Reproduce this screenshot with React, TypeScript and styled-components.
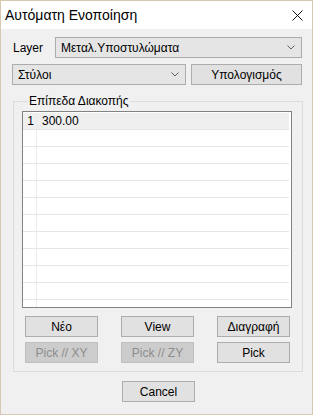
import styled, { createGlobalStyle } from "styled-components";

const GlobalStyle = createGlobalStyle`
  html, body {
    margin: 0;
    padding: 0;
    background: #f0f0f0;
  }
  body {
    font-family: "Liberation Sans", "Noto Sans", sans-serif;
    font-size: 12px;
    color: #000;
  }
  * {
    box-sizing: border-box;
  }
`;

const Window = styled.div`
  width: 313px;
  height: 415px;
  border: 1px solid #d9c8b1;
  background: #f0f0f0;
  display: flex;
  flex-direction: column;
`;

const TitleBar = styled.div`
  height: 28px;
  flex-shrink: 0;
  background: #fff;
  display: flex;
  align-items: center;
  justify-content: space-between;
  padding: 0 9px 0 4px;
  font-size: 14px;
`;

const Body = styled.div`
  display: flex;
  flex-direction: column;
  padding: 8px 10px 0 11px;
`;

const Row = styled.div<{ $top?: number }>`
  display: flex;
  align-items: center;
  gap: 5px;
  margin-top: ${(p) => p.$top || 0}px;
  height: 21px;
`;

const Label = styled.div`
  width: 38px;
  flex-shrink: 0;
  padding-left: 1px;
`;

const Combo = styled.div<{ $width?: number }>`
  height: 21px;
  ${(p) => (p.$width ? `width: ${p.$width}px;` : "flex: 1;")}
  flex-shrink: 0;
  display: flex;
  align-items: center;
  justify-content: space-between;
  padding: 0 6px 0 5px;
  border: 1px solid #acacac;
  background: #e5e5e5;
`;

const Button = styled.button<{ $width?: number }>`
  height: 21px;
  ${(p) => (p.$width ? `width: ${p.$width}px;` : "flex: 1;")}
  font-family: inherit;
  font-size: 12px;
  color: #000;
  background: #e1e1e1;
  border: 1px solid #adadad;
  padding: 0;
  &:disabled {
    color: #8d8d8d;
    background: #cccccc;
    border-color: #bfbfbf;
  }
`;

const Group = styled.fieldset`
  margin: 8px -1px 0 1px;
  padding: 0 10px 8px 8px;
  border: 1px solid #dcdcdc;
  min-width: 0;
`;

const Legend = styled.legend`
  margin-left: 6px;
  padding: 0 1px;
  line-height: 16px;
`;

const List = styled.div`
  margin-top: 2px;
  height: 197px;
  border: 1px solid #828282;
  background: #fff;
  padding: 1px 2px 0 0;
  overflow: hidden;
`;

const ListRow = styled.div<{ $selected?: boolean }>`
  display: flex;
  height: 17px;
  border-bottom: 1px solid #e6e6e6;
  background: ${(p) => (p.$selected ? "#efefef" : "#fff")};
`;

const NumCell = styled.div`
  width: 14px;
  border-right: 1px solid #ececec;
  text-align: right;
  padding-right: 2px;
  line-height: 16px;
`;

const ValueCell = styled.div`
  padding-left: 5px;
  line-height: 16px;
`;

const ButtonGrid = styled.div`
  display: grid;
  grid-template-columns: repeat(3, 73px);
  column-gap: 23px;
  row-gap: 5px;
  margin: 8px 0 0 3px;
`;

const Footer = styled.div`
  display: flex;
  justify-content: center;
  padding-left: 3px;
  margin-top: 9px;
`;

const Chevron = () => (
  <svg width="8" height="5" viewBox="0 0 8 5">
    <polyline points="0.5,0.5 4,4 7.5,0.5" fill="none" stroke="#606060" strokeWidth="1" />
  </svg>
);

const CloseIcon = () => (
  <svg width="11" height="11" viewBox="0 0 11 11">
    <path d="M0.5 0.5 L10.5 10.5 M10.5 0.5 L0.5 10.5" stroke="#111" strokeWidth="1" />
  </svg>
);

const rows = [{ n: "1", v: "300.00" }, ...Array.from({ length: 11 }, () => ({ n: "", v: "" }))];

export default function App() {
  return (
    <>
      <GlobalStyle />
      <Window>
        <TitleBar>
          <span>Αυτόματη Ενοποίηση</span>
          <CloseIcon />
        </TitleBar>
        <Body>
          <Row $top={0}>
            <Label>Layer</Label>
            <Combo>
              <span>Μεταλ.Υποστυλώματα</span>
              <Chevron />
            </Combo>
          </Row>
          <Row $top={6}>
            <Combo $width={174}>
              <span>Στύλοι</span>
              <Chevron />
            </Combo>
            <Button>Υπολογισμός</Button>
          </Row>
          <Group>
            <Legend>Επίπεδα Διακοπής</Legend>
            <List>
              {rows.map((r, i) => (
                <ListRow key={i} $selected={i === 0}>
                  <NumCell>{r.n}</NumCell>
                  <ValueCell>{r.v}</ValueCell>
                </ListRow>
              ))}
            </List>
            <ButtonGrid>
              <Button>Νέο</Button>
              <Button>View</Button>
              <Button>Διαγραφή</Button>
              <Button disabled>Pick // XY</Button>
              <Button disabled>Pick // ZY</Button>
              <Button>Pick</Button>
            </ButtonGrid>
          </Group>
          <Footer>
            <Button $width={73}>Cancel</Button>
          </Footer>
        </Body>
      </Window>
    </>
  );
}
